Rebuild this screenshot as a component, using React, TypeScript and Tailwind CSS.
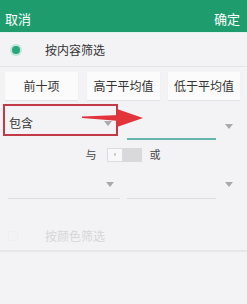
import React from "react";

const Tri = ({ className = "" }: { className?: string }) => (
  <svg width="8" height="5" viewBox="0 0 8 5" className={className}>
    <polygon points="0,0 8,0 4,5" fill="#a9a9ab" />
  </svg>
);

export default function App() {
  return (
    <div
      className="relative w-[247px] h-[304px] overflow-hidden bg-[#f3f2f5] text-[#333]"
      style={{ fontFamily: '"Noto Sans CJK SC", "Noto Sans", sans-serif' }}
    >
      {/* header */}
      <div className="h-[32px] bg-[#1f9c6e] flex items-center justify-between pl-[5px] pr-[7px] pt-[4px] text-white text-[13px] leading-none">
        <span>取消</span>
        <span>确定</span>
      </div>
      <div className="h-[1px] bg-[#dff3ec]" />

      {/* row: by content */}
      <div className="h-[34px] flex items-center pl-[10px] border-b border-[#e4e3e6]">
        <div className="w-[12px] h-[12px] rounded-full bg-[#bfe6d6] flex items-center justify-center">
          <div className="w-[8px] h-[8px] rounded-full bg-[#2ba57a]" />
        </div>
        <span className="ml-[23px] text-[12px] leading-none text-[#333]">按内容筛选</span>
      </div>

      {/* buttons */}
      <div className="flex pl-[5px] pt-[5px] pb-[4px]">
        <div className="w-[73px] h-[28px] bg-[#fbfbfb] shadow-[0_1px_1px_rgba(0,0,0,0.06)] flex items-center justify-center text-[12px] leading-none text-[#333]">前十项</div>
        <div className="ml-[9px] w-[73px] h-[28px] bg-[#fbfbfb] shadow-[0_1px_1px_rgba(0,0,0,0.06)] flex items-center justify-center text-[12px] leading-none text-[#333]">高于平均值</div>
        <div className="ml-[8px] w-[72px] h-[28px] bg-[#fbfbfb] shadow-[0_1px_1px_rgba(0,0,0,0.06)] flex items-center justify-center text-[12px] leading-none text-[#333]">低于平均值</div>
      </div>

      {/* dropdown row 1 */}
      <div className="relative h-[36px] flex">
        <div className="ml-[3px] w-[115px] h-[32px] border-2 border-[#c23a48] flex items-center pl-[4px] pr-[4px] pt-[6px]">
          <span className="text-[12px] leading-none text-[#333]">包含</span>
          <div className="flex-1" />
          <Tri />
        </div>
        <div className="ml-[9px] w-[89px] h-[36px] border-b-2 border-[#63b6ad]" />
        <div className="ml-[9px] pt-[20px]">
          <Tri />
        </div>
      </div>

      {/* switch row */}
      <div className="flex items-center justify-center mt-[7px] h-[15px] pr-[1px]">
        <span className="text-[11px] leading-none text-[#444]">与</span>
        <div className="ml-[10px] w-[35px] h-[14px] flex bg-[#d9d9db]">
          <div className="w-[16px] h-[14px] bg-[#f8f8f8] border border-[#dcdcdc] flex items-center justify-center">
            <div className="w-[2px] h-[3px] bg-[#cfcfcf]" />
          </div>
        </div>
        <span className="ml-[8px] text-[11px] leading-none text-[#444]">或</span>
      </div>

      {/* dropdown row 2 */}
      <div className="flex mt-[17px] h-[20px]">
        <div className="ml-[8px] w-[112px] h-[20px] border-b border-[#dcdcde] flex justify-end pr-[6px] pt-[3px]">
          <Tri />
        </div>
        <div className="ml-[7px] w-[89px] h-[20px] border-b border-[#dcdcde]" />
        <div className="ml-[9px] pt-[3px]">
          <Tri />
        </div>
      </div>

      {/* by colour row */}
      <div className="mt-[22px] h-[31px] flex items-center pl-[8px] border-b-2 border-[#e6e5e8]">
        <div className="w-[10px] h-[10px] border border-[#efeef1]" />
        <span className="ml-[27px] text-[12px] leading-none text-[#d6d6d8]">按颜色筛选</span>
      </div>

      {/* red arrow annotation */}
      <svg className="absolute left-0 top-0" width="247" height="304" viewBox="0 0 247 304">
        <polygon points="82,116.5 120,115 120,121 82,118" fill="#e2353b" />
        <polygon points="117,109 143,118 117,127" fill="#e2353b" />
      </svg>
    </div>
  );
}
